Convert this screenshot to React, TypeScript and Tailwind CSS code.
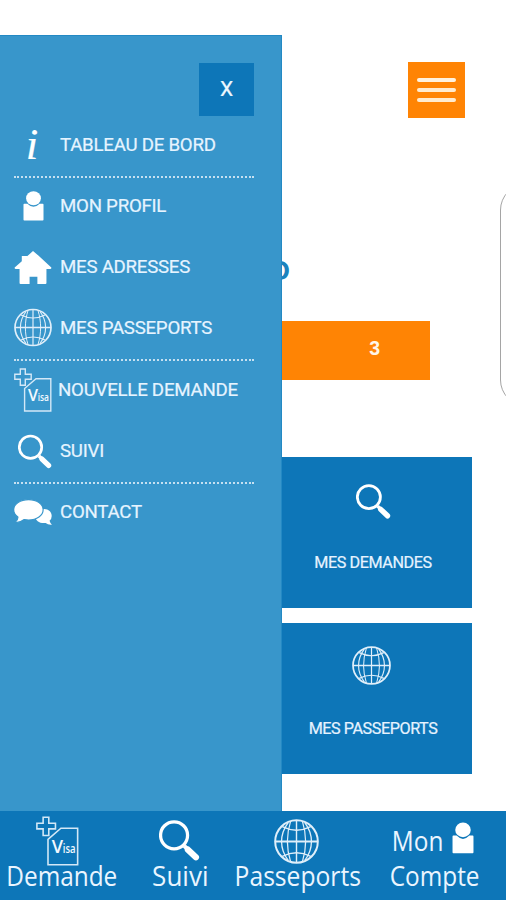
import type { ReactNode } from 'react';

function Globe({ size, className = '' }: { size: number; className?: string }) {
  return (
    <svg width={size} height={size} viewBox="0 0 38 38" fill="none" stroke="#e0effa" className={className}>
      <circle cx="19" cy="19" r="18" strokeWidth="1.7" />
      <path d="M1 19H37" strokeWidth="1.7" />
      <path d="M19 1V37" strokeWidth="1.2" />
      <path d="M14 2C10.5 13 10.5 25 14 36M24 2C27.5 13 27.5 25 24 36" strokeWidth="1" />
      <path d="M12 3C4.500 13 4.500 25 12 35M26 3C33.500 13 33.500 25 26 35" strokeWidth="1.100" />
      <path d="M7 6.500Q19 12.500 31 6.500M7 31.500Q19 25.500 31 31.500" strokeWidth="1.200" />
    </svg>
  );
}

function Search({ size, className = '' }: { size: number; className?: string }) {
  return (
    <svg width={size} height={size} viewBox="0 0 34 34" fill="none" stroke="#fff" className={className}>
      <circle cx="12.5" cy="12.7" r="11.2" strokeWidth="2.7" />
      <path d="M21 21.5L24.5 25" strokeWidth="3.4" />
      <path d="M24 24.6L30.6 30.9" strokeWidth="5.2" strokeLinecap="round" />
    </svg>
  );
}

function Person({ width, height, className = '' }: { width: number; height: number; className?: string }) {
  return (
    <svg width={width} height={height} viewBox="0 0 21 30" fill="#fff" className={className}>
      <path d="M1.3 12.7H4.4Q10.500 19 16.600 12.700H19.700Q20.500 12.700 20.500 13.500V28.700Q20.500 29.500 19.700 29.500H1.300Q.5 29.500 .5 28.700V13.500Q.5 12.700 1.300 12.700Z" />
      <ellipse cx="10.5" cy="7.3" rx="7.4" ry="7" />
    </svg>
  );
}

function Visa({ width, height, className = '' }: { width: number; height: number; className?: string }) {
  return (
    <svg width={width} height={height} viewBox="0 0 38 44" fill="none" stroke="#d3e8f7" strokeWidth="1.4" className={className}>
      <path d="M6.3 1H11.3V6.3H17.2V11.3H11.3V17.2H6.3V11.3H.8V6.3H6.3Z" />
      <path d="M22 10.7H36.8V43H10.6V20.5Z" />
      <text x="14" y="33" fill="#f2f9ff" stroke="none" fontFamily="Open Sans, sans-serif" fontWeight="600" fontSize="15.5" textLength="10" lengthAdjust="spacingAndGlyphs">V</text>
      <text x="23.7" y="33" fill="#f2f9ff" stroke="none" fontFamily="Open Sans, sans-serif" fontWeight="600" fontSize="10.5" textLength="11.3" lengthAdjust="spacingAndGlyphs">isa</text>
    </svg>
  );
}

function House() {
  return (
    <svg width="39" height="35" viewBox="0 0 39 35" fill="#fff">
      <path d="M19.5 .5L25 5.3L38.3 17.5Q38.6 19 37 19H33.3V33.5Q33.3 34.5 32.3 34.5H24V27H16V34.5H6.7Q5.7 34.5 5.7 33.5V19H2Q.3 19 .7 17.5L8 11V5.7H13.5V6Z" />
    </svg>
  );
}

function Chat() {
  return (
    <svg width="39" height="27" viewBox="0 0 39 27" fill="#fff">
      <path d="M31 10C35.500 10 38.700 13 38.700 17.200Q38.700 20.300 36.500 22Q37 24.200 38.900 26Q35 26.400 32.500 24.300C26 25 22 21.500 22 18C22 14 26 10 31 10Z" />
      <path stroke="#3896cb" strokeWidth="1.2" d="M15 .2C23.500 .2 29.900 4.800 29.900 10.700S23.500 21.200 15 21.200Q12.500 21.200 10.500 20.700Q6 24.200 1 23.800Q4.200 21 4 18.200Q-.3 15.200 -.3 10.700C-.3 4.800 6.500 .2 15 .2Z" />
    </svg>
  );
}

function Row({ icon, label, divided, indent = 'pl-[46px]' }: { icon: ReactNode; label: string; divided?: boolean; indent?: string }) {
  return (
    <li className={`relative flex h-[61.1px] items-center ${indent}`}>
      {divided && <i className="absolute inset-x-0 top-0 border-t-2 border-dotted border-[#c6e0f1]" />}
      <span className="absolute left-0 flex w-[38px] justify-center">{icon}</span>
      <span className="whitespace-nowrap text-[18.7px] leading-none tracking-[-0.26px] text-[#e6f4ff] [-webkit-text-stroke:0.2px_#e6f4ff]">{label}</span>
    </li>
  );
}

function Card({ icon, label }: { icon: ReactNode; label: string }) {
  return (
    <section className="flex h-[151px] w-[197px] flex-col items-center bg-[#0d76b8]">
      <div className="flex h-[88px] items-center">{icon}</div>
      <span className="mt-[9px] whitespace-nowrap text-[16.2px] leading-[18px] tracking-[-0.44px] text-[#e6f3ff] [-webkit-text-stroke:0.2px_#e6f3ff]">{label}</span>
    </section>
  );
}

export default function App() {
  return (
    <div className="relative flex h-[900px] w-[506px] flex-col overflow-hidden bg-white font-[Roboto,sans-serif]">
      <main className="flex h-[811px] flex-col pt-[62px]">
        <header className="flex justify-end pr-[41.5px]">
          <button className="flex h-[56px] w-[56.5px] flex-col items-center justify-center gap-[6px] bg-[#ff8404]">
            <span className="h-[4px] w-[39px] rounded-sm bg-[#fff2df]" />
            <span className="h-[4px] w-[39px] rounded-sm bg-[#ffebcf]" />
            <span className="h-[4px] w-[39px] rounded-sm bg-[#ffebcf]" />
          </button>
        </header>
        <h1 className="mt-[138px] flex h-[28px] w-[290px] items-center justify-end pt-[2px] font-['Liberation_Sans',sans-serif] text-[28px] font-bold leading-none text-[#1b83bd]">D</h1>
        <div className="mt-[37px] flex h-[59px] w-[429.5px] items-center justify-end bg-[#ff8404] pr-[49.5px] font-['Liberation_Sans',sans-serif] text-[19.5px] font-bold text-[#fff6e8]"><span className="-mt-[3px]">3</span></div>
        <div className="mt-[76.5px] flex flex-col items-end gap-[15px] pr-[34.5px]">
          <Card icon={<Search size={35} className="translate-y-px" />} label="MES DEMANDES" />
          <Card icon={<Globe size={39} className="-translate-x-[2px] -translate-y-px" />} label="MES PASSEPORTS" />
        </div>
      </main>
      <div className="absolute left-[500px] top-[184px] h-[222px] w-[80px] rounded-[26px] border border-[#a5a5a5]" />
      <aside className="absolute left-0 top-[35px] h-[776px] w-[282px] border-r border-t border-[#2389c4] bg-[#3896cb] px-[14px] pt-[27px]">
        <div className="flex justify-end pr-[13px]">
          <button className="flex h-[53px] w-[55px] items-center justify-center bg-[#0d76b8] text-[21px] text-[#eef8ff] [-webkit-text-stroke:0.2px_#eef8ff]">X</button>
        </div>
        <ul className="-mt-px w-[240px]">
          <Row icon={<i className="-mt-[3px] -translate-x-px font-['Liberation_Serif',serif] text-[45px] leading-none text-white [-webkit-text-stroke:0.2px_white]">i</i>} label="TABLEAU DE BORD" />
          <Row divided icon={<Person width={21} height={30} className="-mt-[2px]" />} label="MON PROFIL" />
          <Row icon={<House />} label="MES ADRESSES" />
          <Row icon={<Globe size={39} className="-mt-[2px]" />} label="MES PASSEPORTS" />
          <Row divided icon={<Visa width={38} height={44} />} label="NOUVELLE DEMANDE" indent="pl-[44px]" />
          <Row icon={<Search size={35} className="ml-1" />} label="SUIVI" />
          <Row divided icon={<Chat />} label="CONTACT" />
        </ul>
      </aside>
      <nav className="flex h-[89px] bg-[#0d76b8] font-['Open_Sans',sans-serif] text-[28px] leading-[30px] text-[#eaf5ff]">
        <a className="flex w-[123px] flex-col items-center">
          <Visa width={43} height={50} className="mt-[5px] shrink-0 -translate-x-[4px]" />
          <span className="-mt-[6px] scale-x-[0.87]">Demande</span>
        </a>
        <a className="flex w-[113px] flex-col items-center">
          <Search size={41} className="mt-[9px] shrink-0" />
          <span className="-mt-px translate-x-px scale-x-[0.93]">Suivi</span>
        </a>
        <a className="flex w-[124px] flex-col items-center">
          <Globe size={45} className="mt-[8px] shrink-0 -translate-x-px" />
          <span className="-mt-[4px] translate-x-px scale-x-[0.88]">Passeports</span>
        </a>
        <a className="flex w-[148px] flex-col items-center pt-[10px]">
          <span className="flex h-[36px] items-center gap-[3px]"><span className="-translate-x-[2px] scale-x-[0.87] pt-[2px]">Mon</span><Person width={22} height={32} className="-mt-[3px] -translate-x-px" /></span>
          <span className="mt-[3px] translate-x-[2px] scale-x-[0.87]">Compte</span>
        </a>
      </nav>
    </div>
  );
}
